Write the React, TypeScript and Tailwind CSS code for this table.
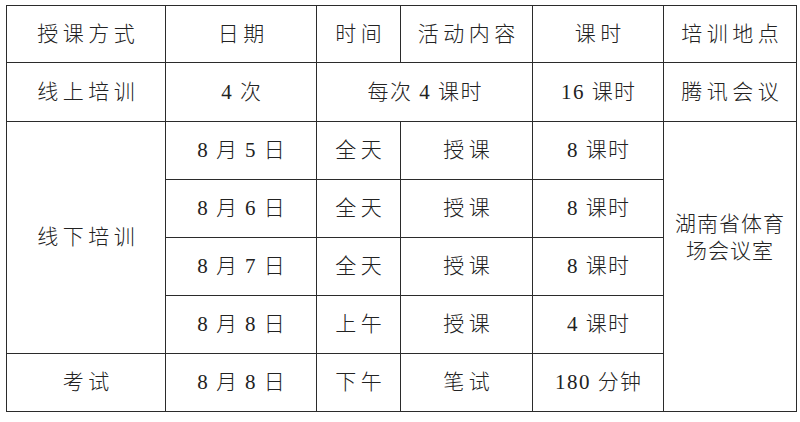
const cell =
  "border border-[#2b2b2b] text-center align-middle p-0 whitespace-nowrap";

function T({ children, wide }: { children: React.ReactNode; wide?: boolean }) {
  return (
    <span className={wide ? "tracking-[4.5px] pl-[4.5px]" : "tracking-[1.5px] pl-[1.5px]"}>
      {children}
    </span>
  );
}

const rows = [
  { date: "8 月 5 日", time: "全天", act: "授课", hours: "8 课时" },
  { date: "8 月 6 日", time: "全天", act: "授课", hours: "8 课时" },
  { date: "8 月 7 日", time: "全天", act: "授课", hours: "8 课时" },
  { date: "8 月 8 日", time: "上午", act: "授课", hours: "4 课时" },
];

export default function App() {
  return (
    <main className="h-[422px] w-[800px] bg-white pl-[6px] pt-[5px] font-['Liberation_Serif','Noto_Sans_CJK_SC',serif] text-[21px] font-light leading-none text-[#222]">
      <table className="w-[790px] table-fixed border-collapse">
        <colgroup>
          <col className="w-[159px]" />
          <col className="w-[151px]" />
          <col className="w-[84px]" />
          <col className="w-[132px]" />
          <col className="w-[131px]" />
          <col className="w-[133px]" />
        </colgroup>
        <tbody>
          <tr className="h-[57px]">
            <td className={cell}><T wide>授课方式</T></td>
            <td className={cell}><T wide>日期</T></td>
            <td className={cell}><T wide>时间</T></td>
            <td className={cell}><T wide>活动内容</T></td>
            <td className={cell}><T wide>课时</T></td>
            <td className={cell}><T wide>培训地点</T></td>
          </tr>
          <tr className="h-[59px]">
            <td className={cell}><T wide>线上培训</T></td>
            <td className={cell}><T>4 次</T></td>
            <td className={cell} colSpan={2}><T>每次 4 课时</T></td>
            <td className={cell}><T>16 课时</T></td>
            <td className={cell}><T wide>腾讯会议</T></td>
          </tr>
          {rows.map((r, i) => (
            <tr key={i} className="h-[58px]">
              {i === 0 && (
                <td className={cell} rowSpan={4}><T wide>线下培训</T></td>
              )}
              <td className={cell}><T>{r.date}</T></td>
              <td className={cell}><T wide>{r.time}</T></td>
              <td className={cell}><T wide>{r.act}</T></td>
              <td className={cell}><T>{r.hours}</T></td>
              {i === 0 && (
                <td className={cell + " pb-[58px] leading-[27px]"} rowSpan={5}>
                  <span className="tracking-[1px]">湖南省体育</span>
                  <br />
                  <span className="tracking-[1px]">场会议室</span>
                </td>
              )}
            </tr>
          ))}
          <tr className="h-[58px]">
            <td className={cell}><T wide>考试</T></td>
            <td className={cell}><T>8 月 8 日</T></td>
            <td className={cell}><T wide>下午</T></td>
            <td className={cell}><T wide>笔试</T></td>
            <td className={cell}><T>180 分钟</T></td>
          </tr>
        </tbody>
      </table>
    </main>
  );
}
